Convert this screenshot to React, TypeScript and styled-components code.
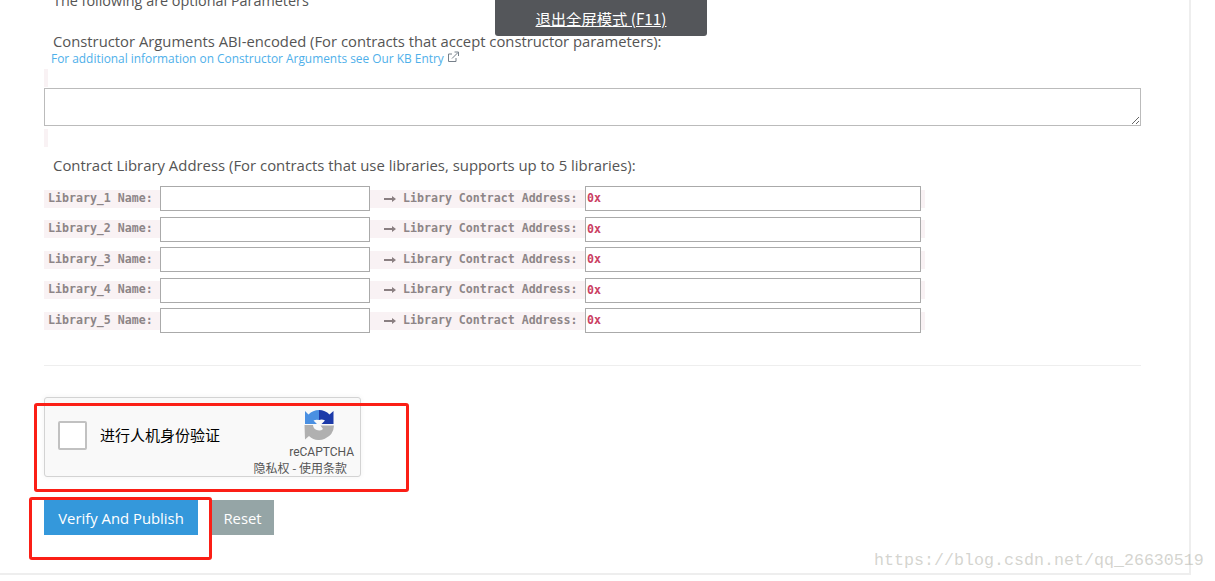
import styled, { createGlobalStyle } from 'styled-components'

const libraries = [1, 2, 3, 4, 5]

const GlobalStyle = createGlobalStyle`
  html, body {
    margin: 0;
    padding: 0;
    height: 581px;
    overflow: hidden;
    background: #fff;
  }
  * {
    box-sizing: border-box;
  }
`

const ExternalLinkIcon = () => (
  <LinkIcon viewBox="0 0 12 12" fill="none" stroke="#76808a" strokeWidth="1">
    <path d="M9 7v3.500H1.500V3H5" />
    <path d="M5 7.500 11 1.500M7.500 1h4v4" />
  </LinkIcon>
)

const RecaptchaLogo = () => (
  <LogoIcon viewBox="0 0 30 30">
    <path d="M15 0A15 15 0 0 0 4.500 4.500L1 1V14H13L9.500 10.500A8 8 0 0 1 15 10Z" fill="#4a90e2" />
    <path d="M15 0A15 15 0 0 1 25.500 4.500L29.500 1V14H17.500L21 10.500A8 8 0 0 0 15 10Z" fill="#1c3aa9" />
    <path d="M0.500 15H9A6 6 0 0 0 19 19L16.500 15.500H30A15 15 0 0 1 5 26L1 29.500Z" fill="#b0b0b0" />
  </LogoIcon>
)

const ArrowIcon = () => (
  <ArrowMark viewBox="0 0 12 8" fill="#8a7f81">
    <path d="M0 3h8V1l4 3-4 3V5H0z" />
  </ArrowMark>
)

export default function App() {
  return (
    <>
      <GlobalStyle />
      <Page>
        <Intro>The following are optional Parameters</Intro>
        <Heading>Constructor Arguments ABI-encoded (For contracts that accept constructor parameters):</Heading>
        <InfoLink>
          For additional information on Constructor Arguments see Our KB Entry
          <ExternalLinkIcon />
        </InfoLink>
        <EmptyCode />
        <ArgsInput />
        <EmptyCode />
        <LibraryHeading>Contract Library Address (For contracts that use libraries, supports up to 5 libraries):</LibraryHeading>
        <LibraryList>
          {libraries.map((n) => (
            <LibraryRow key={n}>
              <NameLabel>Library_{n} Name:</NameLabel>
              <NameInput />
              <AddressLabel>
                <ArrowIcon />
                Library Contract Address:
              </AddressLabel>
              <AddressInput defaultValue="0x" />
              <RowTail />
            </LibraryRow>
          ))}
        </LibraryList>
        <Divider />
        <Captcha>
          <CheckBox />
          <CaptchaText>进行人机身份验证</CaptchaText>
          <CaptchaBrand>
            <RecaptchaLogo />
            <BrandName>reCAPTCHA</BrandName>
            <BrandLinks>隐私权 - 使用条款</BrandLinks>
          </CaptchaBrand>
        </Captcha>
        <Actions>
          <ActionButton>Verify And Publish</ActionButton>
          <ActionButton $secondary>Reset</ActionButton>
        </Actions>
      </Page>
      <FullscreenToast>
        <span>退出全屏模式 (F11)</span>
      </FullscreenToast>
      <RedBox $left={34} $top={403} $width={375} $height={89} />
      <RedBox $left={29} $top={497} $width={183} $height={63} />
      <Watermark>https://blog.csdn.net/qq_26630519</Watermark>
    </>
  )
}

const Page = styled.div`
  width: 1191px;
  height: 575px;
  padding-left: 44px;
  padding-right: 50px;
  border-right: 2px solid #eee;
  border-bottom: 2px solid #eee;
  overflow: hidden;
  font-family: 'Open Sans', 'Noto Sans CJK SC', sans-serif;
  color: #555;
`

const Intro = styled.div`
  margin: -9px 0 0 9px;
  height: 19px;
  font-size: 14.4px;
  line-height: 19px;
`

const Heading = styled.div`
  margin: 23px 0 0 9px;
  height: 20px;
  font-size: 14.8px;
  font-weight: 500;
  line-height: 17px;
  white-space: nowrap;
`

const InfoLink = styled.div`
  display: flex;
  align-items: center;
  margin: -3px 0 0 7px;
  height: 16px;
  font-size: 11.9px;
  line-height: 16px;
  color: #4fb0ea;
`

const LinkIcon = styled.svg`
  width: 12px;
  height: 12px;
  margin: -2px 0 0 3px;
`

const EmptyCode = styled.div`
  width: 4px;
  height: 18px;
  margin-top: 3px;
  background: #f9f2f4;
`

const ArgsInput = styled.textarea`
  display: block;
  width: 1097px;
  height: 38px;
  margin-top: 1px;
  border: 1px solid #bbb;
  background: #fff;
`

const LibraryHeading = styled(Heading)`
  margin-top: 9px;
  font-size: 14.9px;
  line-height: 18px;
`

const LibraryList = styled.div`
  display: flex;
  flex-direction: column;
  gap: 5.5px;
  margin-top: 10px;
`

const LibraryRow = styled.div`
  display: flex;
  align-items: center;
  height: 25px;
  font-family: 'DejaVu Sans Mono', 'Liberation Mono', monospace;
  font-size: 11.6px;
  font-weight: 700;
  color: #8d8587;
`

const NameLabel = styled.div`
  width: 116px;
  height: 18px;
  padding-left: 4px;
  line-height: 16px;
  background: #f9f2f4;
  white-space: pre;
`

const NameInput = styled.input`
  width: 210px;
  height: 25px;
  border: 1px solid #aaa;
  background: #fff;
  padding: 0;
`

const AddressLabel = styled(NameLabel)`
  display: flex;
  align-items: flex-start;
  width: 215px;
  padding-left: 14px;
`

const ArrowMark = styled.svg`
  flex: none;
  width: 12px;
  height: 8px;
  margin: 5px 7px 0 0;
`

const AddressInput = styled.input`
  width: 336px;
  height: 25px;
  padding: 0 1px 1px;
  border: 1px solid #aaa;
  background: #fff;
  font-family: 'DejaVu Sans Mono', 'Liberation Mono', monospace;
  font-size: 11.6px;
  font-weight: 700;
  color: #cb3f63;
`

const RowTail = styled.div`
  width: 4px;
  height: 18px;
  background: #f9f2f4;
`

const Divider = styled.hr`
  width: 1097px;
  height: 1px;
  margin: 32px 0 0;
  border: 0;
  background: #eee;
`

const Captcha = styled.div`
  display: flex;
  align-items: flex-start;
  width: 317px;
  height: 80px;
  margin-top: 31px;
  padding: 23px 6px 0 13px;
  border: 1px solid #d3d3d3;
  border-radius: 3px;
  background: #f9f9f9;
  box-shadow: 0 0 4px 1px rgba(0, 0, 0, 0.04);
  color: #000;
`

const CheckBox = styled.div`
  flex: none;
  width: 29px;
  height: 29px;
  border: 2px solid #c1c1c1;
  border-radius: 2px;
  background: #fff;
`

const CaptchaText = styled.div`
  margin: -1px 0 0 13px;
  font-family: 'Noto Sans CJK SC', sans-serif;
  font-size: 15px;
  line-height: 30px;
`

const CaptchaBrand = styled.div`
  position: relative;
  flex: 1;
  height: 56px;
  margin-top: -11px;
`

const LogoIcon = styled.svg`
  position: absolute;
  top: 0;
  right: 20px;
  width: 30px;
  height: 30px;
`

const BrandName = styled.div`
  position: absolute;
  top: 35px;
  right: 0;
  font-family: 'Roboto', 'Liberation Sans', sans-serif;
  font-size: 12px;
  line-height: 14px;
  color: #555;
`

const BrandLinks = styled.div`
  position: absolute;
  top: 50px;
  right: 7px;
  font-family: 'Noto Sans CJK SC', sans-serif;
  font-size: 12px;
  line-height: 16px;
  white-space: nowrap;
  color: #555;
`

const Actions = styled.div`
  display: flex;
  gap: 13px;
  margin-top: 23px;
`

const ActionButton = styled.button<{ $secondary?: boolean }>`
  width: ${(p) => (p.$secondary ? '63px' : '154px')};
  height: 35px;
  padding: 0;
  border: 0;
  background: ${(p) => (p.$secondary ? '#95a5a6' : '#3498db')};
  font-family: 'Open Sans', sans-serif;
  font-size: 14.85px;
  color: #fff;
`

const FullscreenToast = styled.div`
  position: absolute;
  top: 0;
  left: 495px;
  display: flex;
  align-items: center;
  justify-content: center;
  width: 212px;
  height: 36px;
  border-radius: 0 0 3px 3px;
  background: #54565a;
  font-family: 'Noto Sans CJK SC', 'Open Sans', sans-serif;
  font-size: 15.3px;
  color: #fff;
  text-decoration: underline;
`

const RedBox = styled.div<{ $left: number; $top: number; $width: number; $height: number }>`
  position: absolute;
  left: ${(p) => p.$left}px;
  top: ${(p) => p.$top}px;
  width: ${(p) => p.$width}px;
  height: ${(p) => p.$height}px;
  border: 3px solid #fb1f16;
  border-radius: 3px;
`

const Watermark = styled.div`
  position: absolute;
  top: 550px;
  left: 874px;
  font-family: 'Liberation Mono', monospace;
  font-size: 16.67px;
  line-height: 22px;
  color: rgba(170, 170, 160, 0.5);
  white-space: nowrap;
`
